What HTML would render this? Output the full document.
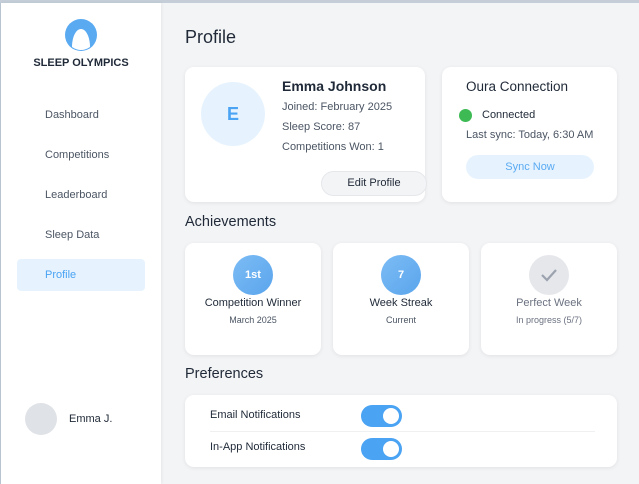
<!DOCTYPE html>
<html><head><style>
*{margin:0;padding:0;box-sizing:border-box}
body{width:639px;height:484px;overflow:hidden;background:#f3f4f6;font-family:"Liberation Sans",sans-serif;position:relative;color:#1f2937}
.a{position:absolute}
.top{left:0;top:0;width:639px;height:3px;background:#c5ced8}
.side{left:0;top:3px;width:161px;height:481px;background:#fff;border-left:1px solid #b8c4d0;box-shadow:1px 0 3px rgba(0,0,0,.06)}
.nav{left:45px;font-size:11px;color:#4b5563}
.card{background:#fff;border-radius:9px;box-shadow:0 1px 4px rgba(0,0,0,.08)}
.t{font-size:11px;color:#4b5563;white-space:nowrap}
.h{font-size:16px;color:#1f2937}
.badge{width:40px;height:40px;border-radius:50%;background:linear-gradient(135deg,#7cbcf5,#5aa5ec);color:#fff;font-weight:bold;font-size:11px;display:flex;align-items:center;justify-content:center}
.ac{text-align:center;width:136px}
.tog{width:41px;height:22px;border-radius:11px;background:#4aa3f3}
.tog::after{content:"";position:absolute;right:3px;top:3px;width:16px;height:16px;border-radius:50%;background:#fff}
</style></head><body>
<div class="a top"></div>
<div class="a side"></div>
<svg class="a" style="left:65px;top:19px" width="32" height="32"><circle cx="16" cy="16" r="16" fill="#5aaaf2"/><path d="M7 28 C7 18 11 10 16 10 C21 10 25 18 25 28 Q16 34 7 28Z" fill="#fff"/></svg>
<div class="a" style="left:0;width:162px;top:57px;text-align:center;font-size:11px;font-weight:bold;color:#1f2937">SLEEP OLYMPICS</div>
<div class="a nav" style="top:109px">Dashboard</div>
<div class="a nav" style="top:149px">Competitions</div>
<div class="a nav" style="top:189px">Leaderboard</div>
<div class="a nav" style="top:229px">Sleep Data</div>
<div class="a" style="left:17px;top:259px;width:128px;height:32px;background:#e6f3fe;border-radius:4px"></div>
<div class="a nav" style="top:269px;color:#4aa3f3">Profile</div>
<div class="a" style="left:25px;top:403px;width:32px;height:32px;border-radius:50%;background:#dfe2e6"></div>
<div class="a t" style="left:69px;top:413px;color:#1f2937">Emma J.</div>

<div class="a" style="left:185px;top:27px;font-size:18px;color:#1f2937">Profile</div>

<div class="a card" style="left:185px;top:67px;width:240px;height:135px"></div>
<div class="a" style="left:201px;top:82px;width:64px;height:64px;border-radius:50%;background:#e6f3fe;color:#4aa3f3;font-weight:bold;font-size:18px;display:flex;align-items:center;justify-content:center">E</div>
<div class="a" style="left:282px;top:78px;font-size:14px;font-weight:bold;color:#1f2937">Emma Johnson</div>
<div class="a t" style="left:282px;top:101px">Joined: February 2025</div>
<div class="a t" style="left:282px;top:121px">Sleep Score: 87</div>
<div class="a t" style="left:282px;top:141px">Competitions Won: 1</div>
<div class="a" style="left:321px;top:171px;width:106px;height:25px;border-radius:13px;background:#f3f4f6;border:1px solid #e5e7eb;font-size:11px;color:#1f2937;text-align:center;line-height:23px">Edit Profile</div>

<div class="a card" style="left:442px;top:67px;width:175px;height:135px"></div>
<div class="a" style="left:466px;top:79px;font-size:13.5px;color:#1f2937">Oura Connection</div>
<div class="a" style="left:459px;top:109px;width:13px;height:13px;border-radius:50%;background:#3dba54"></div>
<div class="a t" style="left:482px;top:109px;color:#1f2937">Connected</div>
<div class="a t" style="left:466px;top:129px">Last sync: Today, 6:30 AM</div>
<div class="a" style="left:466px;top:155px;width:128px;height:24px;border-radius:12px;background:#e6f3fe;color:#5aaaf2;font-size:11px;text-align:center;line-height:24px">Sync Now</div>

<div class="a h" style="left:185px;top:214px;font-size:14.5px">Achievements</div>
<div class="a card" style="left:185px;top:243px;width:136px;height:112px"></div>
<div class="a card" style="left:333px;top:243px;width:136px;height:112px"></div>
<div class="a card" style="left:481px;top:243px;width:136px;height:112px"></div>
<div class="a badge" style="left:233px;top:255px">1st</div>
<div class="a badge" style="left:381px;top:255px">7</div>
<div class="a" style="left:529px;top:255px;width:40px;height:40px;border-radius:50%;background:#e5e7eb"><svg width="40" height="40"><path d="M13 20 L18 25 L27 15" stroke="#9ca3af" stroke-width="2.2" fill="none"/></svg></div>
<div class="a ac" style="left:185px;top:297px;font-size:11px;color:#1f2937">Competition Winner</div>
<div class="a ac" style="left:185px;top:315px;font-size:9px;color:#4b5563">March 2025</div>
<div class="a ac" style="left:333px;top:297px;font-size:11px;color:#1f2937">Week Streak</div>
<div class="a ac" style="left:333px;top:315px;font-size:9px;color:#4b5563">Current</div>
<div class="a ac" style="left:481px;top:297px;font-size:11px;color:#6b7280">Perfect Week</div>
<div class="a ac" style="left:481px;top:315px;font-size:9px;color:#6b7280">In progress (5/7)</div>

<div class="a h" style="left:185px;top:366px;font-size:14.5px">Preferences</div>
<div class="a card" style="left:185px;top:395px;width:432px;height:72px"></div>
<div class="a t" style="left:210px;top:409px;color:#1f2937">Email Notifications</div>
<div class="a tog" style="left:361px;top:405px"></div>
<div class="a" style="left:210px;top:431px;width:385px;height:1px;background:#eef0f2"></div>
<div class="a t" style="left:210px;top:441px;color:#1f2937">In-App Notifications</div>
<div class="a tog" style="left:361px;top:438px"></div>
</body></html>
